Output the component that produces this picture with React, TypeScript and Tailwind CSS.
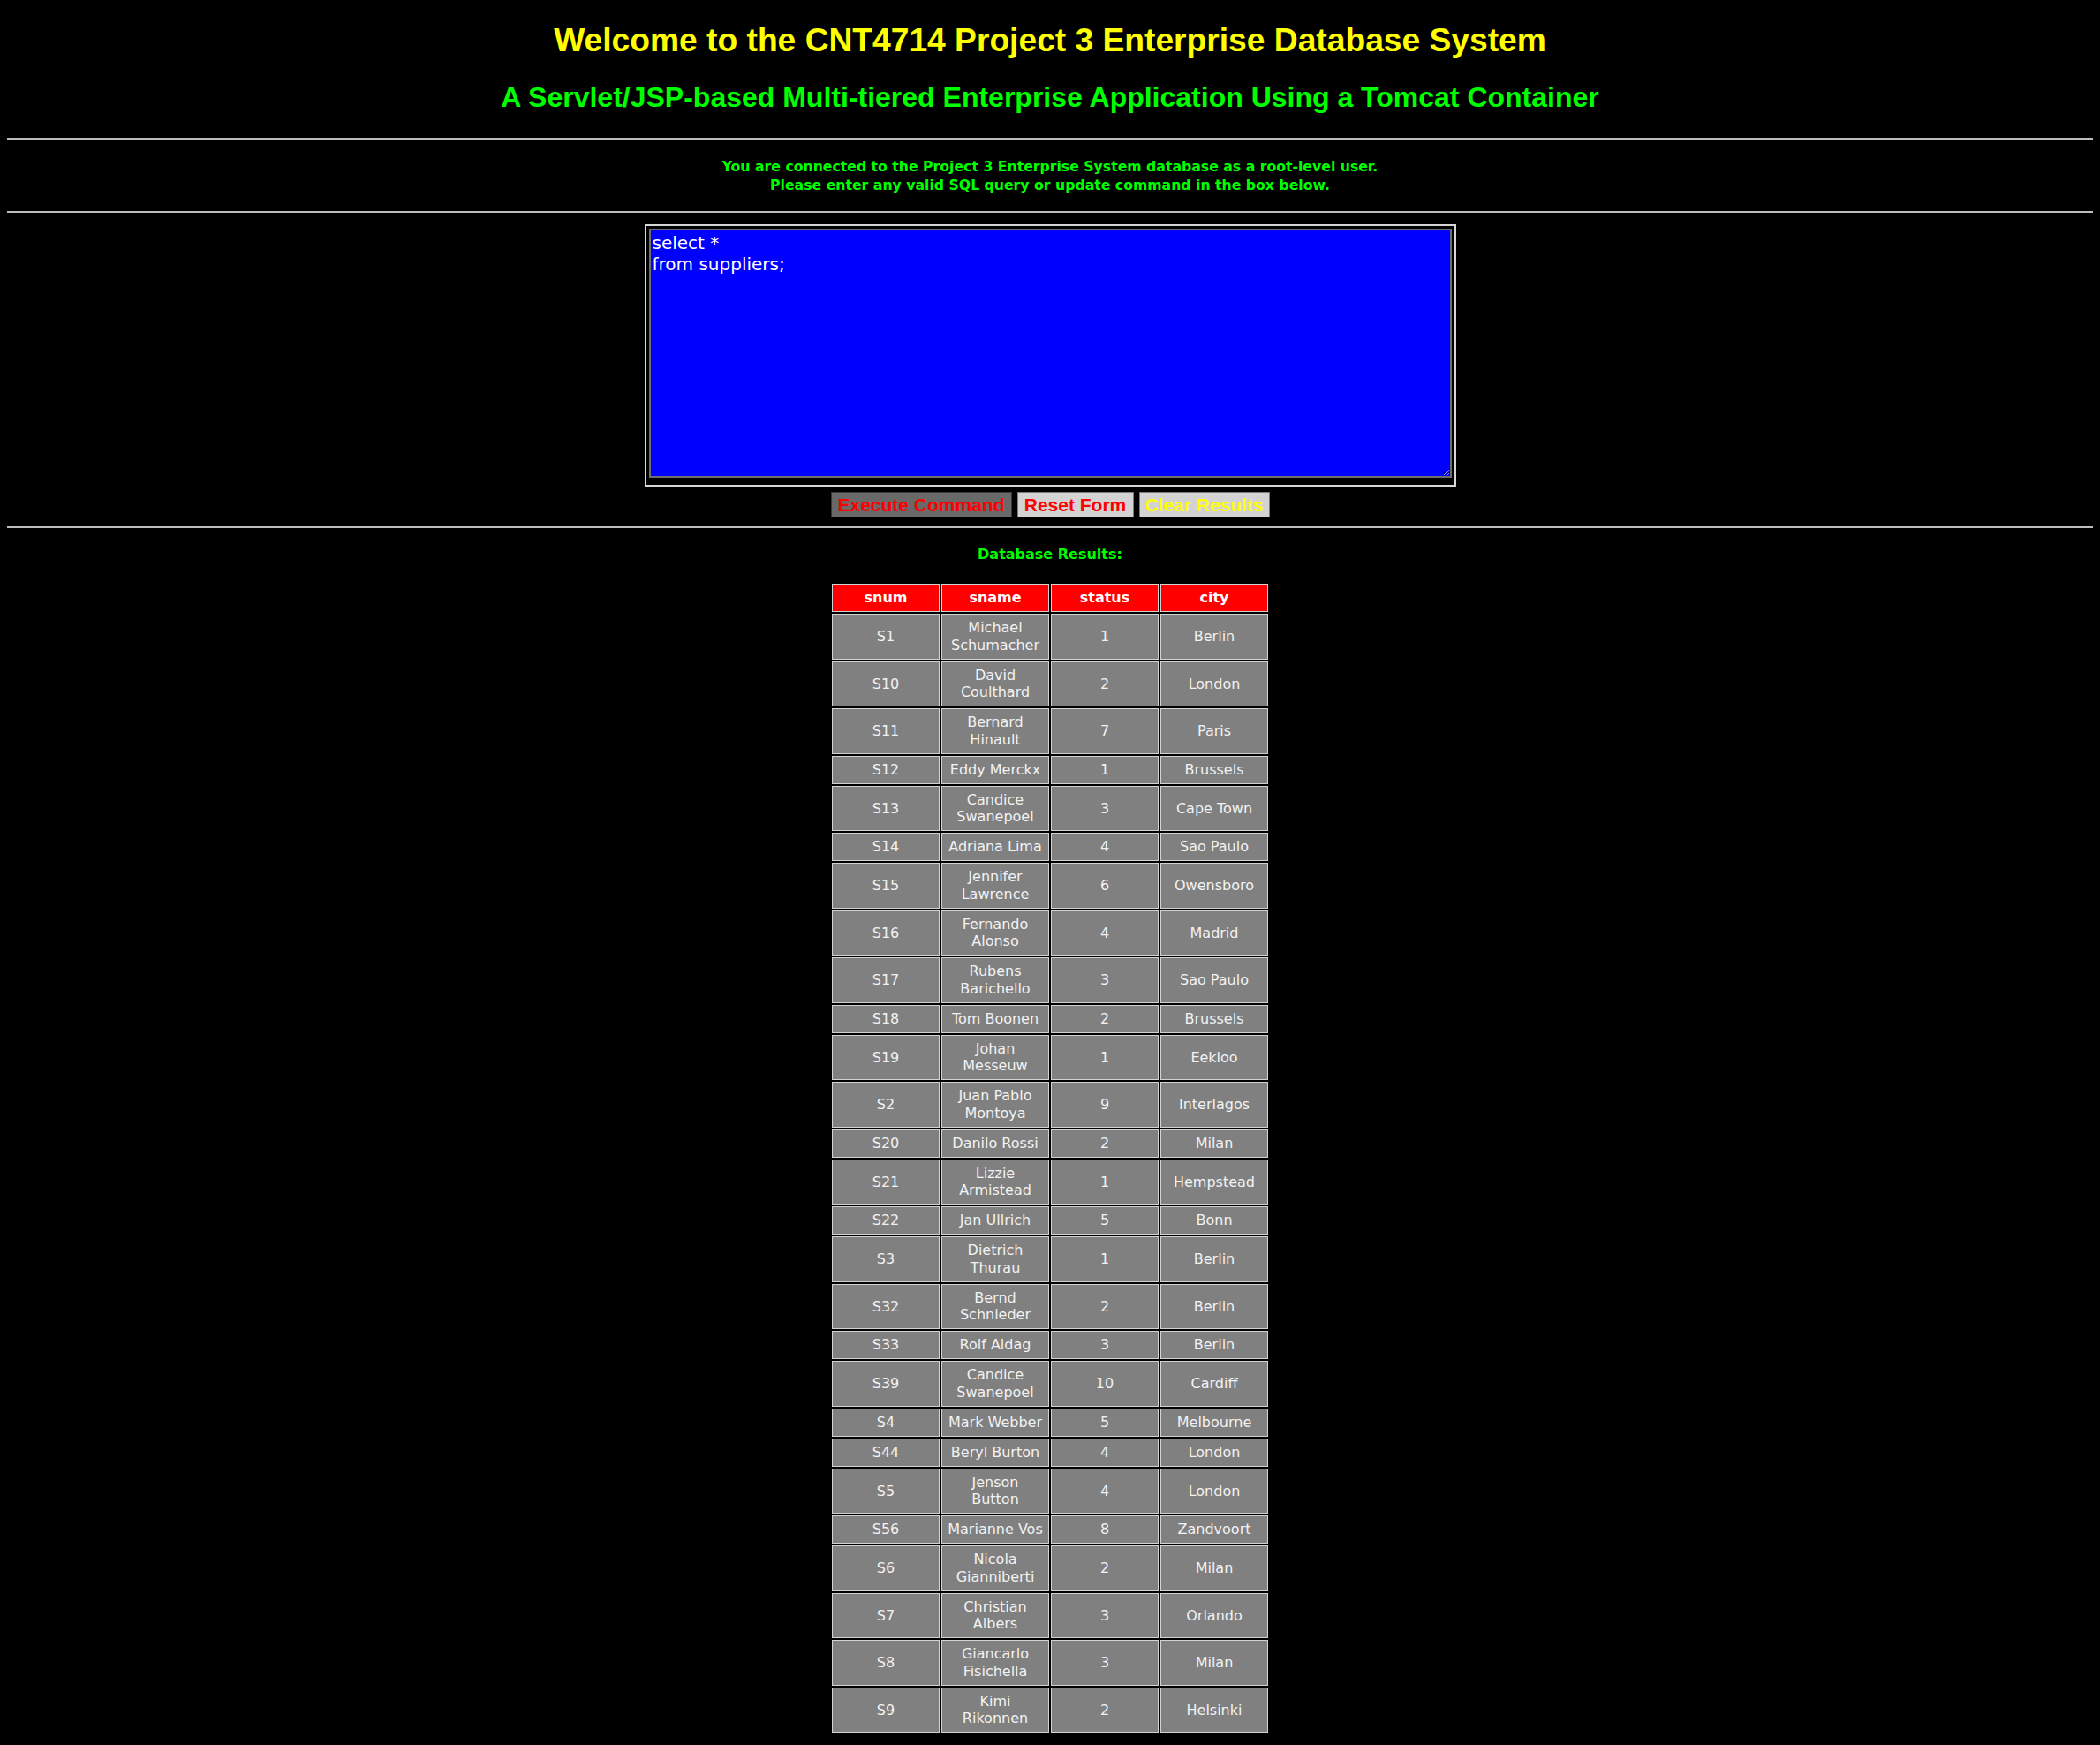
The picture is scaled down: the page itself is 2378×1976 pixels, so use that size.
import React from "react";

type Row = { snum: string; name: string[]; status: string; city: string };

const rows: Row[] = [
  { snum: "S1", name: ["Michael", "Schumacher"], status: "1", city: "Berlin" },
  { snum: "S10", name: ["David", "Coulthard"], status: "2", city: "London" },
  { snum: "S11", name: ["Bernard", "Hinault"], status: "7", city: "Paris" },
  { snum: "S12", name: ["Eddy Merckx"], status: "1", city: "Brussels" },
  { snum: "S13", name: ["Candice", "Swanepoel"], status: "3", city: "Cape Town" },
  { snum: "S14", name: ["Adriana Lima"], status: "4", city: "Sao Paulo" },
  { snum: "S15", name: ["Jennifer", "Lawrence"], status: "6", city: "Owensboro" },
  { snum: "S16", name: ["Fernando", "Alonso"], status: "4", city: "Madrid" },
  { snum: "S17", name: ["Rubens", "Barichello"], status: "3", city: "Sao Paulo" },
  { snum: "S18", name: ["Tom Boonen"], status: "2", city: "Brussels" },
  { snum: "S19", name: ["Johan", "Messeuw"], status: "1", city: "Eekloo" },
  { snum: "S2", name: ["Juan Pablo", "Montoya"], status: "9", city: "Interlagos" },
  { snum: "S20", name: ["Danilo Rossi"], status: "2", city: "Milan" },
  { snum: "S21", name: ["Lizzie", "Armistead"], status: "1", city: "Hempstead" },
  { snum: "S22", name: ["Jan Ullrich"], status: "5", city: "Bonn" },
  { snum: "S3", name: ["Dietrich", "Thurau"], status: "1", city: "Berlin" },
  { snum: "S32", name: ["Bernd", "Schnieder"], status: "2", city: "Berlin" },
  { snum: "S33", name: ["Rolf Aldag"], status: "3", city: "Berlin" },
  { snum: "S39", name: ["Candice", "Swanepoel"], status: "10", city: "Cardiff" },
  { snum: "S4", name: ["Mark Webber"], status: "5", city: "Melbourne" },
  { snum: "S44", name: ["Beryl Burton"], status: "4", city: "London" },
  { snum: "S5", name: ["Jenson", "Button"], status: "4", city: "London" },
  { snum: "S56", name: ["Marianne Vos"], status: "8", city: "Zandvoort" },
  { snum: "S6", name: ["Nicola", "Gianniberti"], status: "2", city: "Milan" },
  { snum: "S7", name: ["Christian", "Albers"], status: "3", city: "Orlando" },
  { snum: "S8", name: ["Giancarlo", "Fisichella"], status: "3", city: "Milan" },
  { snum: "S9", name: ["Kimi", "Rikonnen"], status: "2", city: "Helsinki" },
];

const cell =
  "border border-[#d3d3d3] bg-[#808080] px-[4px] py-[5.25px] text-center align-middle text-[16px] leading-[19.5px] text-[#f2f2f2] whitespace-nowrap";
const head =
  "border border-[#d3d3d3] bg-[#ff0000] px-[4px] py-[5.25px] text-center align-middle text-[16px] leading-[19.5px] font-bold text-white";

function Rule() {
  return <div className="mx-2 h-[2px] bg-[#bdbdbd]" />;
}

export default function App() {
  return (
    <div className="min-h-screen bg-black pb-[12px] text-center font-['DejaVu_Sans',Verdana,sans-serif]">
      <h1 className="pt-[24px] font-['Liberation_Sans',Arial,sans-serif] text-[37.2px] font-bold leading-[43px] text-[#ffff00]">
        Welcome to the CNT4714 Project 3 Enterprise Database System
      </h1>
      <h2 className="mt-[25px] font-['Liberation_Sans',Arial,sans-serif] text-[32px] font-bold leading-[37px] text-[#00ff00]">
        A Servlet/JSP-based Multi-tiered Enterprise Application Using a Tomcat Container
      </h2>
      <div className="mt-[27px]">
        <Rule />
      </div>
      <div className="mt-[20px] text-[15.7px] font-bold leading-[21px] text-[#00ff00]">
        You are connected to the Project 3 Enterprise System database as a root-level user.
        <br />
        Please enter any valid SQL query or update command in the box below.
      </div>
      <div className="mt-[19px]">
        <Rule />
      </div>
      <div className="mt-[13px] flex justify-center">
        <div className="w-[919px] border-2 border-[#d6d6d6] px-[3px] pt-[3px] pb-[8px]">
          <textarea
            className="block h-[282px] w-full resize border-2 border-[#6e6e6e] bg-[#0000ff] px-[2px] py-[2px] font-['DejaVu_Sans',Verdana,sans-serif] text-[20px] leading-[24px] text-white outline-none"
            defaultValue={"select *\nfrom suppliers;"}
          />
        </div>
      </div>
      <div className="mt-[6px] flex justify-center gap-[6px] font-['Liberation_Sans',Arial,sans-serif] text-[21px] font-bold leading-[27px]">
        <button className="h-[29px] w-[205px] border border-[#3a3a3a] bg-[#696969] text-[#ff0000]">
          Execute Command
        </button>
        <button className="h-[29px] w-[132px] border border-[#7a7a7a] bg-[#d3d3d3] text-[#ff0000]">
          Reset Form
        </button>
        <button className="h-[29px] w-[148px] border border-[#7a7a7a] bg-[#d3d3d3] text-[#ffff00]">
          Clear Results
        </button>
      </div>
      <div className="mt-[10px]">
        <Rule />
      </div>
      <div className="mt-[20px] text-[16px] font-bold leading-[19px] text-[#00ff00]">Database Results:</div>
      <div className="mt-[22px] flex justify-center">
        <table className="w-[498px] table-fixed border-separate border-spacing-[2px]">
          <thead>
            <tr>
              <th className={head}>snum</th>
              <th className={head}>sname</th>
              <th className={head}>status</th>
              <th className={head}>city</th>
            </tr>
          </thead>
          <tbody>
            {rows.map((r) => (
              <tr key={r.snum}>
                <td className={cell}>{r.snum}</td>
                <td className={cell}>
                  {r.name.map((n, i) => (
                    <React.Fragment key={i}>
                      {i > 0 && <br />}
                      {n}
                    </React.Fragment>
                  ))}
                </td>
                <td className={cell}>{r.status}</td>
                <td className={cell}>{r.city}</td>
              </tr>
            ))}
          </tbody>
        </table>
      </div>
    </div>
  );
}
